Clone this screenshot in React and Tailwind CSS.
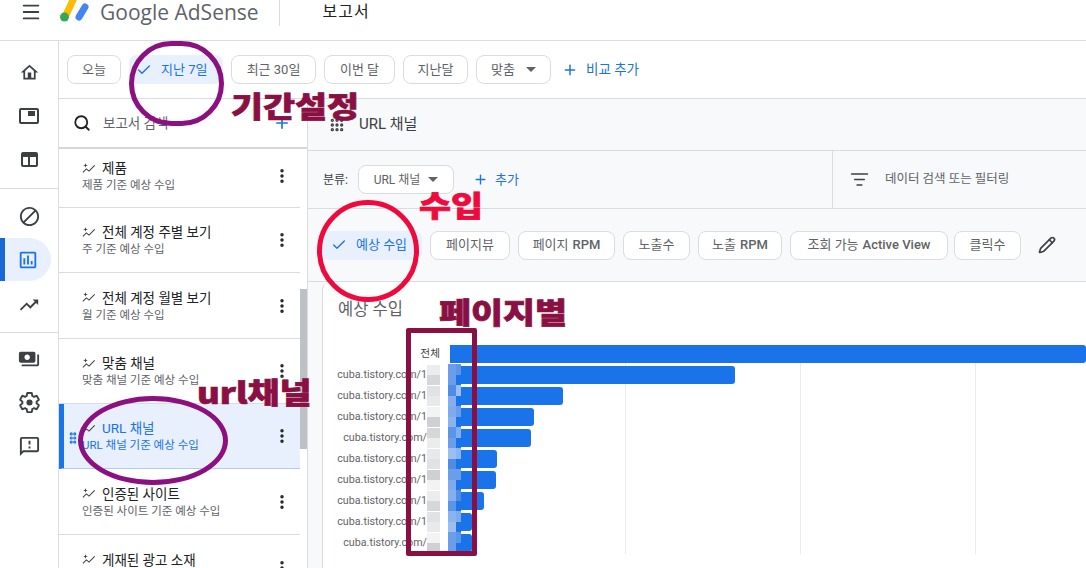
import React from "react";
import { Check, Plus, Search, EllipsisVertical, Menu, Pencil, ListFilter, Grip, GripVertical } from "lucide-react";

const FONT = "font-['Roboto','Noto_Sans_CJK_KR',sans-serif]";
const HEAVY = "font-['Noto_Sans_CJK_KR',sans-serif] font-black text-[29px] leading-[36px] scale-x-[1.2] origin-left whitespace-nowrap";

const reports = [
  { title: "제품", sub: "제품 기준 예상 수입", h: "h-[59px] pb-[4px]" },
  { title: "전체 계정 주별 보기", sub: "주 기준 예상 수입", h: "h-[65px]" },
  { title: "전체 계정 월별 보기", sub: "월 기준 예상 수입", h: "h-[66px]" },
  { title: "맞춤 채널", sub: "맞춤 채널 기준 예상 수입", h: "h-[65px]" },
  { title: "URL 채널", sub: "URL 채널 기준 예상 수입", h: "h-[65px]", active: true },
  { title: "인증된 사이트", sub: "인증된 사이트 기준 예상 수입", h: "h-[66px]" },
  { title: "게재된 광고 소재", sub: "게재된 광고 소재 기준 예상 수입", h: "h-[66px]" },
];

const bars = [
  { label: "전체", width: "w-[636px]", plain: true },
  { label: "cuba.tistory.com/1", width: "w-[285px]" },
  { label: "cuba.tistory.com/1", width: "w-[113px]" },
  { label: "cuba.tistory.com/1", width: "w-[84px]" },
  { label: "cuba.tistory.com/", width: "w-[81px]" },
  { label: "cuba.tistory.com/1", width: "w-[47px]" },
  { label: "cuba.tistory.com/1", width: "w-[46px]" },
  { label: "cuba.tistory.com/1", width: "w-[34px]" },
  { label: "cuba.tistory.com/1", width: "w-[22px]" },
  { label: "cuba.tistory.com/", width: "w-[22px]" },
];

const mosaicBlue = ["bg-[#8ab4f0]", "bg-[#6a9eeb]", "bg-[#4f8ce8]", "bg-[#7eabee]", "bg-[#5b95ea]", "bg-[#9cbff2]", "bg-[#6a9eeb]", "bg-[#83aeef]"];
const mosaicGray = ["bg-[#cfd0d2]", "bg-[#ececed]", "bg-[#e1e2e4]", "bg-[#f3f3f4]", "bg-[#d6d7d9]", "bg-[#e8e9ea]"];

const Material = ({ d, className }) => (
  <svg viewBox="0 0 24 24" className={className} fill="currentColor">
    <path d={d} />
  </svg>
);

const SparkLine = ({ className }) => (
  <svg viewBox="0 0 16 12" className={className} fill="none" stroke="currentColor" strokeWidth="1.2">
    <path d="M1 10.5l4-4 3 2.5 6.5-6.5" />
    <path d="M4 0.5v4M2 2.5h4" strokeWidth="1" />
  </svg>
);

const Logo = () => (
  <svg viewBox="0 0 30 24" className="w-[30px] h-[24px] overflow-hidden">
    <path d="M6 15L14 -2" stroke="#fbbc04" strokeWidth="7" strokeLinecap="round" fill="none" />
    <path d="M19 17l6-10" stroke="#4285f4" strokeWidth="7" strokeLinecap="round" fill="none" />
    <circle cx="4.5" cy="17" r="4.5" fill="#34a853" />
  </svg>
);

const Chip = ({ children, className = "" }) => (
  <div className={`h-[29px] shrink-0 flex items-center justify-center rounded-lg border border-[#dadce0] bg-white text-[13px] text-[#5f6368] ${className}`}>
    {children}
  </div>
);

const SelectedChip = ({ children, className = "" }) => (
  <div className={`h-[29px] shrink-0 flex items-center rounded-lg bg-[#e8f0fe] text-[13px] text-[#1a73e8] ${className}`}>
    <Check className="w-4 h-4 mr-[9px]" strokeWidth={2} />
    {children}
  </div>
);

const Caret = () => <span className="w-0 h-0 border-x-[5px] border-x-transparent border-t-[5px] border-t-[#5f6368]" />;

const RailIcon = ({ children, className = "" }) => (
  <div className={`h-[43.5px] flex items-center justify-center text-[#3c4043] ${className}`}>{children}</div>
);

const ReportRow = ({ report }) => (
  <div
    className={`${report.h} relative shrink-0 flex items-center border-b pl-[23px] pr-[9px] ${
      report.active ? "bg-[#e8f0fe] border-[#aecbfa] border-l-[5px] border-l-[#1a73e8] !pl-[18px]" : "border-[#dadce0]"
    }`}
  >
    {report.active && <GripVertical className="absolute left-[2px] top-[27px] w-[14px] h-[14px] text-[#1a73e8]" strokeWidth={3.4} />}
    <div className="flex-1 min-w-0">
      <div className={`flex items-center gap-[6px] text-[13.5px] leading-[18px] whitespace-nowrap ${report.active ? "text-[#1a73e8]" : "text-[#202124]"}`}>
        <SparkLine className="w-[14px] h-[11px] text-[#3c4043]" />
        {report.title}
      </div>
      <div className={`text-[11.5px] leading-[16px] whitespace-nowrap ${report.active ? "text-[#1a73e8]" : "text-[#5f6368]"}`}>{report.sub}</div>
    </div>
    <EllipsisVertical className="w-[18px] h-[18px] text-[#202124]" strokeWidth={2.6} />
  </div>
);

const BarRow = ({ bar, index }) => (
  <div className="h-[21px] flex items-start">
    <div className={`w-[127px] h-[18px] pr-[10px] flex items-center justify-end whitespace-nowrap text-[10.7px] ${bar.plain ? "text-[#3c4043]" : "text-[#5f6368]"}`}>
      {bar.label}
      {!bar.plain && (
        <span className="w-[13px] h-[20px] shrink-0 flex flex-col">
          <span className={`flex-1 ${mosaicGray[index % 6]}`} />
          <span className={`flex-1 ${mosaicGray[(index + 3) % 6]}`} />
        </span>
      )}
    </div>
    <div className={`relative h-[18px] ${bar.width} bg-[#1a73e8] rounded-r-[3px]`}>
      {!bar.plain && (
        <div className="absolute left-[-2px] top-[-2px] w-[13px] h-[22px] grid grid-cols-[8px_5px]">
          <span className={mosaicBlue[index % 8]} />
          <span className={mosaicBlue[(index + 3) % 8]} />
          <span className={mosaicBlue[(index + 5) % 8]} />
          <span className="bg-[#1a73e8]" />
        </div>
      )}
    </div>
  </div>
);

export default function App() {
  return (
    <div className={`relative w-[1086px] h-[568px] overflow-hidden bg-white ${FONT}`}>
      {/* Top bar */}
      <header className="h-[41px] flex items-center border-b border-[#dadce0] pb-[17px]">
        <Menu className="ml-[20px] w-[22px] h-[22px] text-[#3c4043]" strokeWidth={2} />
        <div className="ml-[18px] self-start"><Logo /></div>
        <span className="ml-[10px] text-[21px] leading-[24px] text-[#5f6368] font-['Open_Sans',sans-serif]">Google AdSense</span>
        <div className="ml-[20px] w-px h-[28px] bg-[#dadce0]" />
        <span className="ml-[43px] text-[16px] tracking-[1px] text-[#202124]">보고서</span>
      </header>

      <div className="flex h-[527px]">
        {/* Nav rail */}
        <nav className="w-[59px] shrink-0 border-r border-[#dadce0] pt-[10px]">
          <RailIcon>
            <Material className="w-[21px] h-[21px]" d="M12 5.69l5 4.5V18h-3v-6H10v6H7v-7.81l5-4.5M12 3L2 12h3v8h14v-8h3L12 3z" />
          </RailIcon>
          <RailIcon>
            <div className="relative w-[20px] h-[16px] border-2 border-[#3c4043] rounded-[2px]">
              <span className="absolute right-[2px] top-[1px] w-[7px] h-[5px] bg-[#3c4043]" />
            </div>
          </RailIcon>
          <RailIcon>
            <div className="w-[17px] h-[15px] border-2 border-[#3c4043] rounded-[2px] grid grid-cols-[1fr_6px] grid-rows-[3px_1fr]">
              <span className="col-span-2 bg-[#3c4043]" />
              <span className="border-r-2 border-[#3c4043]" />
            </div>
          </RailIcon>
          <div className="h-px bg-[#dadce0] mt-[6px] mb-[6px]" />
          <RailIcon>
            <Material className="w-[23px] h-[23px]" d="M12 2C6.48 2 2 6.48 2 12s4.48 10 10 10 10-4.48 10-10S17.52 2 12 2zM4 12c0-4.42 3.58-8 8-8 1.85 0 3.55.63 4.9 1.69L5.69 16.9C4.63 15.55 4 13.85 4 12zm8 8c-1.85 0-3.55-.63-4.9-1.69L18.31 7.1C19.37 8.45 20 10.15 20 12c0 4.42-3.58 8-8 8z" />
          </RailIcon>
          <div className="h-[43px] w-[51px] flex items-center justify-center bg-[#e8f0fe] rounded-r-[22px] border-l-[5px] border-[#1967d2]">
            <Material className="w-[22px] h-[22px] text-[#1a73e8]" d="M19 3H5c-1.1 0-2 .9-2 2v14c0 1.1.9 2 2 2h14c1.1 0 2-.9 2-2V5c0-1.1-.9-2-2-2zm0 16H5V5h14v14zM7 10h2v7H7zm4-3h2v10h-2zm4 6h2v4h-2z" />
          </div>
          <RailIcon className="mt-[2px]">
            <Material className="w-[22px] h-[22px]" d="M16 6l2.29 2.29-4.88 4.88-4-4L2 16.59 3.41 18l6-6 4 4 6.3-6.29L22 12V6z" />
          </RailIcon>
          <div className="h-px bg-[#dadce0] my-[5px]" />
          <RailIcon>
            <Material className="w-[22px] h-[22px]" d="M19 14V6c0-1.1-.9-2-2-2H3c-1.1 0-2 .9-2 2v8c0 1.1.9 2 2 2h14c1.1 0 2-.9 2-2zm-9-1c-1.66 0-3-1.34-3-3s1.34-3 3-3 3 1.34 3 3-1.34 3-3 3zm13-6v11c0 1.1-.9 2-2 2H4v-2h17V7h2z" />
          </RailIcon>
          <RailIcon>
            <svg viewBox="0 0 24 24" className="w-[23px] h-[23px]" fill="none" stroke="currentColor" strokeWidth="2">
              <path d="M19.43 12.98c.04-.32.07-.64.07-.98s-.03-.66-.07-.98l2.11-1.65c.19-.15.24-.42.12-.64l-2-3.46c-.12-.22-.39-.3-.61-.22l-2.49 1c-.52-.4-1.08-.73-1.69-.98l-.38-2.65C14.46 2.18 14.25 2 14 2h-4c-.25 0-.46.18-.49.42l-.38 2.65c-.61.25-1.17.59-1.69.98l-2.49-1c-.23-.09-.49 0-.61.22l-2 3.46c-.13.22-.07.49.12.64l2.11 1.65c-.04.32-.07.65-.07.98s.03.66.07.98l-2.11 1.65c-.19.15-.24.42-.12.64l2 3.46c.12.22.39.3.61.22l2.49-1c.52.4 1.08.73 1.69.98l.38 2.65c.03.24.24.42.49.42h4c.25 0 .46-.18.49-.42l.38-2.65c.61-.25 1.17-.59 1.69-.98l2.49 1c.23.09.49 0 .61-.22l2-3.46c.12-.22.07-.49-.12-.64l-2.11-1.65z" />
              <circle cx="12" cy="12" r="3.2" fill="currentColor" stroke="none" />
            </svg>
          </RailIcon>
          <RailIcon>
            <Material className="w-[23px] h-[23px]" d="M20 2H4c-1.1 0-2 .9-2 2v18l4-4h14c1.1 0 2-.9 2-2V4c0-1.1-.9-2-2-2zm0 14H5.17L4 17.17V4h16v12zM11 12h2v2h-2zm0-6h2v4h-2z" />
          </RailIcon>
        </nav>

        <div className="flex-1 min-w-0 flex flex-col">
          {/* Date chips */}
          <div className="h-[58px] shrink-0 flex items-center gap-[8px] pl-[8px] border-b border-[#dadce0]">
            <Chip className="w-[54px]">오늘</Chip>
            <SelectedChip className="w-[94px] pl-[7px]">지난 7일</SelectedChip>
            <Chip className="w-[85px]">최근 30일</Chip>
            <Chip className="w-[71px]">이번 달</Chip>
            <Chip className="w-[65px]">지난달</Chip>
            <Chip className="w-[75px] gap-[11px]">맞춤 <Caret /></Chip>
            <div className="ml-[3px] flex items-center gap-[8px] text-[13.5px] text-[#1a73e8]">
              <Plus className="w-[16px] h-[16px]" strokeWidth={2.2} />
              비교 추가
            </div>
          </div>

          <div className="flex flex-1 min-h-0">
            {/* Report list */}
            <aside className="w-[249px] shrink-0 border-r border-[#dadce0] flex flex-col relative">
              <div className="h-[50px] shrink-0 flex items-center pl-[14px] pr-[16px] border-b-2 border-[#d5d6d8] text-[#5f6368]">
                <Search className="w-[18px] h-[18px] text-[#202124]" strokeWidth={2.4} />
                <span className="ml-[12px] flex-1 text-[13.5px]">보고서 검색</span>
                <Plus className="w-[18px] h-[18px] text-[#1a73e8]" strokeWidth={2.2} />
              </div>
              <div className="flex flex-col overflow-hidden pr-[7px]">
                {reports.map((report) => <ReportRow key={report.title} report={report} />)}
              </div>
              <div className="absolute right-0 top-[190px] w-[7px] h-[160px] bg-[#bdc1c6]" />
            </aside>

            {/* Report content */}
            <main className="flex-1 min-w-0 flex flex-col bg-[#f8f9fa]">
              <div className="h-[52px] shrink-0 flex items-center pl-[21px] gap-[14px] border-b border-[#dadce0] text-[15px] text-[#3c4043]">
                <Grip className="w-[16px] h-[16px] text-[#3c4043]" strokeWidth={3} />
                URL 채널
              </div>
              <div className="h-[58px] shrink-0 flex border-b border-[#dadce0]">
                <div className="w-[525px] flex items-center pl-[15px] border-r border-[#dadce0]">
                  <span className="text-[12px] text-[#3c4043] mr-[10px]">분류:</span>
                  <Chip className="w-[96px] gap-[8px] !text-[12px]">URL 채널 <Caret /></Chip>
                  <div className="ml-[19px] flex items-center gap-[7px] text-[13px] text-[#1a73e8]">
                    <Plus className="w-[15px] h-[15px]" strokeWidth={2.2} />
                    추가
                  </div>
                </div>
                <div className="flex-1 flex items-center pl-[17px] text-[12.5px] text-[#5f6368]">
                  <ListFilter className="w-[19px] h-[19px] text-[#3c4043]" strokeWidth={2} />
                  <span className="ml-[16px]">데이터 검색 또는 필터링</span>
                </div>
              </div>
              <div className="h-[73px] shrink-0 flex items-center gap-[8px] pl-[14px] border-b border-[#dadce0]">
                <SelectedChip className="w-[100px] pl-[9px]">예상 수입</SelectedChip>
                <Chip className="w-[80px]">페이지뷰</Chip>
                <Chip className="w-[97px]">페이지 <b className="ml-[4px] font-medium">RPM</b></Chip>
                <Chip className="w-[67px]">노출수</Chip>
                <Chip className="w-[84px]">노출 <b className="ml-[4px] font-medium">RPM</b></Chip>
                <Chip className="w-[158px] whitespace-nowrap">조회 가능 <b className="ml-[4px] font-medium">Active View</b></Chip>
                <Chip className="w-[67px] -ml-[2px]">클릭수</Chip>
                <Pencil className="ml-[9px] w-[18px] h-[18px] text-[#3c4043]" strokeWidth={2.2} />
              </div>
              <div className="flex-1 min-h-0 ml-[14px] bg-white border-l border-[#dadce0] rounded-tl-lg overflow-hidden relative">
                <div className="pl-[15px] pt-[17px] text-[16.5px] leading-[22px] text-[#5f6368]">예상 수입</div>
                <div className="absolute left-[302px] top-[63px] bottom-[14px] w-px bg-[#e8eaed]" />
                <div className="absolute left-[477px] top-[63px] bottom-[14px] w-px bg-[#e8eaed]" />
                <div className="absolute left-[652px] top-[63px] bottom-[14px] w-px bg-[#e8eaed]" />
                <div className="relative mt-[24px]">
                  {bars.map((bar, index) => <BarRow key={index} bar={bar} index={index} />)}
                </div>
              </div>
            </main>
          </div>
        </div>
      </div>

      {/* Hand-drawn annotations on top of the screenshot */}
      <div className="absolute left-[129px] top-[41px] w-[95px] h-[85px] rounded-full border-[5px] border-[#8b1080]" />
      <div className={`absolute left-[231px] top-[87px] text-[#8a0f42] [-webkit-text-stroke:0.7px_#8a0f42] ${HEAVY}`}>기간설정</div>
      <div className="absolute left-[317px] top-[200px] w-[102px] h-[102px] rounded-full border-[5px] border-[#ee0a3c]" />
      <div className={`absolute left-[419px] top-[186px] text-[#ee0a3c] [-webkit-text-stroke:0.7px_#ee0a3c] ${HEAVY}`}>수입</div>
      <div className={`absolute left-[439px] top-[293px] text-[#8a0f42] [-webkit-text-stroke:0.7px_#8a0f42] ${HEAVY}`}>페이지별</div>
      <div className={`absolute left-[197px] top-[373px] text-[#8a0f42] [-webkit-text-stroke:0.7px_#8a0f42] ${HEAVY}`}>url채널</div>
      <div className="absolute left-[78px] top-[396px] w-[150px] h-[89px] rounded-[50%] border-[5px] border-[#8b1080]" />
      <div className="absolute left-[406px] top-[328px] w-[71px] h-[228px] rounded-[2px] border-[5px] border-[#8a0f42]" />
    </div>
  );
}
